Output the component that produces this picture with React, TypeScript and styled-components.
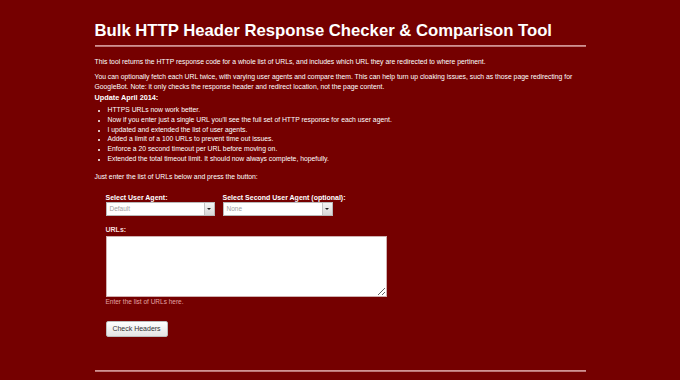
import styled, { createGlobalStyle } from 'styled-components';

const GlobalStyle = createGlobalStyle`
  html, body {
    margin: 0;
    padding: 0;
    background: #750000;
  }
  body {
    font-family: "Liberation Sans", Arial, sans-serif;
    color: #fff;
  }
`;

const Page = styled.div`
  min-height: 380px;
  background: #750000;
  overflow: hidden;
`;

const Wrapper = styled.div`
  width: 491px;
  margin: 0 auto;
`;

const Title = styled.h1`
  margin: 0;
  padding-top: 21px;
  font-size: 16.7px;
  line-height: 20px;
  font-weight: bold;
  color: #fff;
`;

const Rule = styled.div<{ $top: number }>`
  height: 2px;
  margin-top: ${(p) => p.$top}px;
  background: linear-gradient(#d9a0a0, #b36666);
`;

const Text = styled.p<{ $top: number }>`
  margin: ${(p) => p.$top}px 0 0;
  font-size: 6.8px;
  line-height: 10px;
  color: #fff;
`;

const Heading = styled(Text)`
  font-weight: bold;
  font-size: 7.3px;
`;

const List = styled.ul`
  margin: 2px 0 0;
  padding-left: 13px;
  font-size: 6.8px;
  line-height: 9.8px;
  list-style: disc;

  li::marker {
    font-size: 6px;
  }
`;

const Form = styled.form`
  margin-top: 12px;
  padding-left: 11px;
`;

const SelectRow = styled.div`
  display: flex;
  gap: 8px;
`;

const Field = styled.div<{ $width: number }>`
  display: flex;
  flex-direction: column;
  width: ${(p) => p.$width}px;
`;

const Label = styled.label<{ $color?: string }>`
  display: block;
  font-size: 7px;
  line-height: 8px;
  font-weight: bold;
  color: ${(p) => p.$color ?? '#fff'};
  white-space: nowrap;
`;

const SelectBox = styled.div`
  display: flex;
  align-items: stretch;
  height: 14px;
  box-sizing: border-box;
  background: #fff;
  border: 1px solid #b8b8b8;
`;

const SelectValue = styled.span`
  flex: 1;
  padding-left: 3px;
  font-size: 6.5px;
  line-height: 12px;
  color: #a0a0a0;
`;

const SelectArrow = styled.span`
  width: 9px;
  display: flex;
  align-items: center;
  justify-content: center;
  background: linear-gradient(#f4f4f4, #d8d8d8);
  border-left: 1px solid #c4c4c4;

  &::after {
    content: '';
    border-left: 2px solid transparent;
    border-right: 2px solid transparent;
    border-top: 2px solid #222;
  }
`;

const UrlBlock = styled.div`
  margin-top: 10px;
`;

const UrlArea = styled.textarea`
  display: block;
  width: 281px;
  height: 61px;
  box-sizing: border-box;
  margin: 2px 0 0;
  border: 1px solid #d0b0b0;
  background: #fff;
  font-size: 7px;
`;

const Hint = styled.div`
  font-size: 6.5px;
  line-height: 10px;
  color: #e3a3a3;
`;

const Button = styled.button`
  display: block;
  margin-top: 14px;
  width: 62px;
  height: 16px;
  padding: 0;
  font-family: "Liberation Sans", Arial, sans-serif;
  font-size: 7px;
  color: #333;
  background: linear-gradient(#ffffff, #e4e4e4);
  border: 1px solid #bdbdbd;
  border-radius: 2px;
`;

const updates = [
  'HTTPS URLs now work better.',
  "Now if you enter just a single URL you'll see the full set of HTTP response for each user agent.",
  'I updated and extended the list of user agents.',
  'Added a limit of a 100 URLs to prevent time out issues.',
  'Enforce a 20 second timeout per URL before moving on.',
  'Extended the total timeout limit. It should now always complete, hopefully.',
];

const Select = ({ value }: { value: string }) => (
  <SelectBox>
    <SelectValue>{value}</SelectValue>
    <SelectArrow />
  </SelectBox>
);

const App = () => {
  return (
    <Page>
      <GlobalStyle />
      <Wrapper>
        <Title>Bulk HTTP Header Response Checker &amp; Comparison Tool</Title>
        <Rule $top={4} />
        <Text $top={10}>
          This tool returns the HTTP response code for a whole list of URLs, and includes which URL they are
          redirected to where pertinent.
        </Text>
        <Text $top={5}>
          You can optionally fetch each URL twice, with varying user agents and compare them. This can help turn up
          cloaking issues, such as those page redirecting for GoogleBot. Note: it only checks the response header and
          redirect location, not the page content.
        </Text>
        <Heading $top={1}>Update April 2014:</Heading>
        <List>
          {updates.map((u) => (
            <li key={u}>{u}</li>
          ))}
        </List>
        <Text $top={8}>Just enter the list of URLs below and press the button:</Text>
        <Form onSubmit={(e) => e.preventDefault()}>
          <SelectRow>
            <Field $width={109}>
              <Label>Select User Agent:</Label>
              <Select value="Default" />
            </Field>
            <Field $width={110}>
              <Label>Select Second User Agent (optional):</Label>
              <Select value="None" />
            </Field>
          </SelectRow>
          <UrlBlock>
            <Label $color="#f3dede">URLs:</Label>
            <UrlArea />
            <Hint>Enter the list of URLs here.</Hint>
          </UrlBlock>
          <Button type="submit">Check Headers</Button>
        </Form>
        <Rule $top={33} />
      </Wrapper>
    </Page>
  );
};

export default App;
